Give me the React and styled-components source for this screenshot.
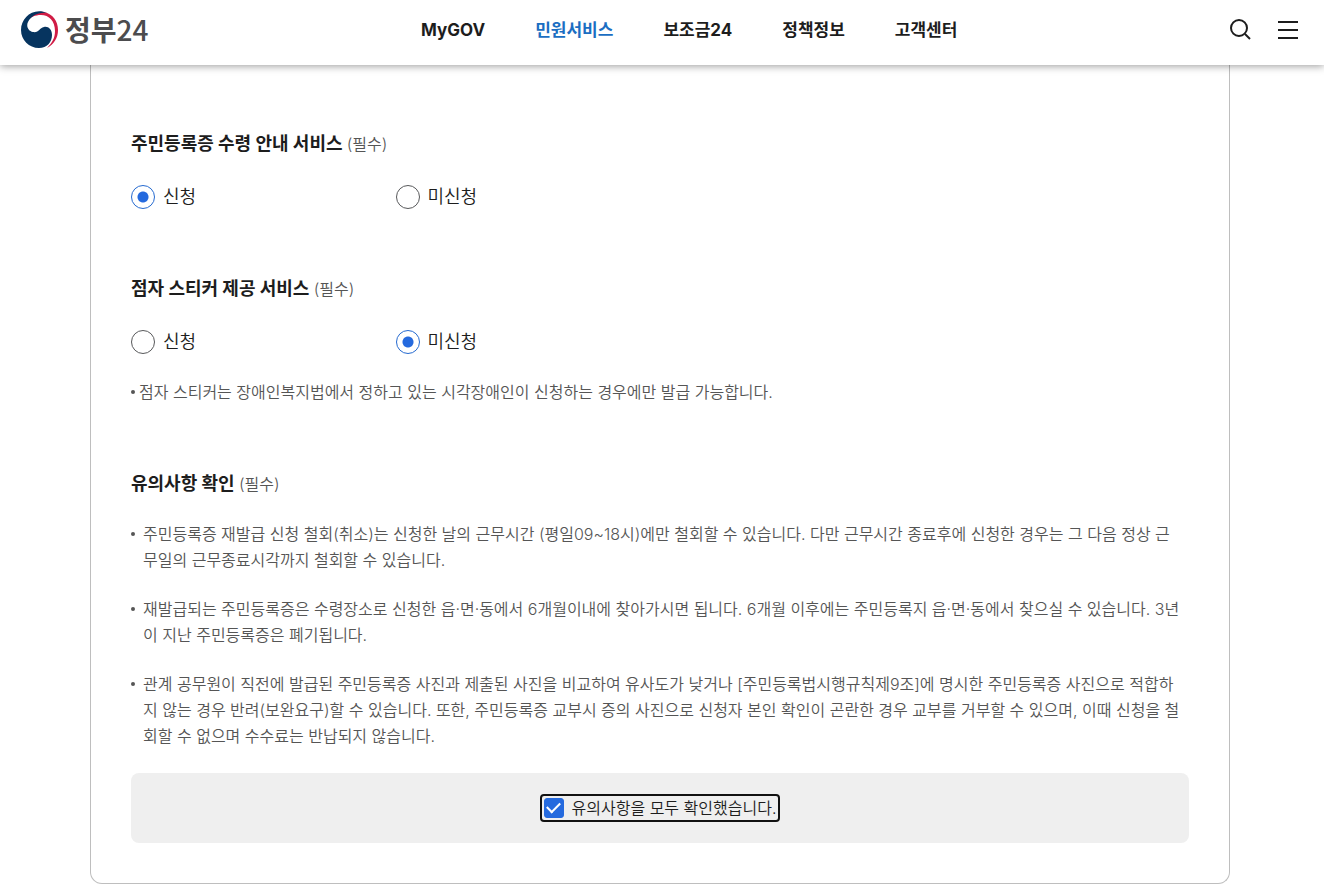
import React, { useState } from 'react';
import styled, { createGlobalStyle } from 'styled-components';

const menus = ['MyGOV', '민원서비스', '보조금24', '정책정보', '고객센터'];

const notices = [
  '주민등록증 재발급 신청 철회(취소)는 신청한 날의 근무시간 (평일09~18시)에만 철회할 수 있습니다. 다만 근무시간 종료후에 신청한 경우는 그 다음 정상 근무일의 근무종료시각까지 철회할 수 있습니다.',
  '재발급되는 주민등록증은 수령장소로 신청한 읍·면·동에서 6개월이내에 찾아가시면 됩니다. 6개월 이후에는 주민등록지 읍·면·동에서 찾으실 수 있습니다. 3년이 지난 주민등록증은 폐기됩니다.',
  '관계 공무원이 직전에 발급된 주민등록증 사진과 제출된 사진을 비교하여 유사도가 낮거나 [주민등록법시행규칙제9조]에 명시한 주민등록증 사진으로 적합하지 않는 경우 반려(보완요구)할 수 있습니다. 또한, 주민등록증 교부시 증의 사진으로 신청자 본인 확인이 곤란한 경우 교부를 거부할 수 있으며, 이때 신청을 철회할 수 없으며 수수료는 반납되지 않습니다.',
];

function ChoiceField({ name, title, defaultValue, children }) {
  const [value, setValue] = useState(defaultValue);

  return (
    <Field>
      <Title as="legend">
        {title} <Required>(필수)</Required>
      </Title>
      <Choices>
        {['신청', '미신청'].map((option) => (
          <Choice key={option}>
            <Radio name={name} value={option} checked={value === option} onChange={() => setValue(option)} />
            {option}
          </Choice>
        ))}
      </Choices>
      {children}
    </Field>
  );
}

export default function App() {
  const [agreed, setAgreed] = useState(true);

  return (
    <>
      <GlobalStyle />
      <Header>
        <Logo href="#home">
          <svg width="38" height="38" viewBox="0 0 38 38" aria-hidden="true">
            <path
              d="M6 10C10 3 17 0 23 1C32 3 37 10 37 19C37 27 33 33 26 37C31 32 34 27 34 20C34 10 28 4 20 4C14 4 10 6 6 10Z"
              fill="#d01c45"
            />
            <path
              d="M26 2C12-4 0 7 0 19C0 29 8 37 18 37C26 37 31 31 31 24C31 18 27 15 23 16C18 17 18 22 12 21C7 20 5 15 7 11C10 5 17 1 26 2Z"
              fill="#06345f"
            />
          </svg>
          <LogoText>
            정부<LogoNumber>24</LogoNumber>
          </LogoText>
        </Logo>
        <Nav>
          {menus.map((menu) => (
            <NavLink key={menu} href="#menu" $active={menu === '민원서비스'}>
              {menu}
            </NavLink>
          ))}
        </Nav>
        <Tools>
          <IconButton type="button" aria-label="검색">
            <svg width="22" height="22" viewBox="0 0 22 22" fill="none" stroke="#1d1d1d" strokeWidth="2">
              <circle cx="9" cy="9" r="8" />
              <path d="M15 15L20 20" />
            </svg>
          </IconButton>
          <IconButton type="button" aria-label="전체메뉴">
            <svg width="20" height="18" viewBox="0 0 20 18" fill="#1d1d1d">
              <path d="M0 0H20V2H0ZM0 8H20V10H0ZM0 16H20V18H0Z" />
            </svg>
          </IconButton>
        </Tools>
      </Header>
      <Main>
        <Card>
          <ChoiceField name="pickup" title="주민등록증 수령 안내 서비스" defaultValue="신청" />
          <ChoiceField name="braille" title="점자 스티커 제공 서비스" defaultValue="미신청">
            <Hint>점자 스티커는 장애인복지법에서 정하고 있는 시각장애인이 신청하는 경우에만 발급 가능합니다.</Hint>
          </ChoiceField>
          <section>
            <Title>
              유의사항 확인 <Required>(필수)</Required>
            </Title>
            <NoticeList>
              {notices.map((notice) => (
                <Notice key={notice}>{notice}</Notice>
              ))}
            </NoticeList>
            <AgreeBox>
              <AgreeLabel>
                <Checkbox checked={agreed} onChange={(e) => setAgreed(e.target.checked)} />
                유의사항을 모두 확인했습니다.
              </AgreeLabel>
            </AgreeBox>
          </section>
        </Card>
      </Main>
    </>
  );
}

const GlobalStyle = createGlobalStyle`
  * {
    box-sizing: border-box;
  }
  body {
    margin: 0;
    background: #fff;
    color: #1d1d1d;
    font-family: Inter, 'Noto Sans CJK KR', sans-serif;
    font-size: 16px;
    font-weight: 350;
    line-height: 26px;
  }
`;

const Header = styled.header`
  position: relative;
  z-index: 1;
  display: flex;
  align-items: center;
  justify-content: space-between;
  height: 65px;
  padding: 0 26px 5px 21px;
  background: #fff;
  box-shadow: 0 1px 8px rgba(0, 0, 0, 0.4);
`;

const Logo = styled.a`
  display: flex;
  align-items: center;
  gap: 6px;
  color: #4c4c4e;
  text-decoration: none;
`;

const LogoText = styled.span`
  padding-bottom: 2px;
  font-family: 'Noto Sans CJK KR', sans-serif;
  font-size: 28px;
  font-weight: 700;
  line-height: 36px;
`;

const LogoNumber = styled.span`
  font-weight: 500;
`;

const Nav = styled.nav`
  display: flex;
  gap: 50px;
`;

const NavLink = styled.a`
  color: ${(p) => (p.$active ? '#1b6ec2' : '#1d1d1d')};
  font-size: 17px;
  font-weight: 700;
  text-decoration: none;
`;

const Tools = styled.div`
  display: flex;
  align-items: center;
  gap: 26px;
`;

const IconButton = styled.button`
  display: flex;
  padding: 0;
  border: 0;
  background: none;
  cursor: pointer;
`;

const Main = styled.main`
  padding: 0 94px 10px 90px;
`;

const Card = styled.div`
  display: flex;
  flex-direction: column;
  gap: 66px;
  padding: 66px 40px 40px;
  border: 1px solid #bebebe;
  border-top: 0;
  border-radius: 0 0 12px 12px;
`;

const Field = styled.fieldset`
  min-width: 0;
  margin: 0;
  padding: 0;
  border: 0;
`;

const Title = styled.h2`
  margin: 0;
  padding: 0;
  font-size: 18px;
  font-weight: 700;
  line-height: 26px;
`;

const Required = styled.span`
  color: #555;
  font-size: 16px;
  font-weight: 350;
`;

const Choices = styled.div`
  display: grid;
  grid-template-columns: repeat(4, 1fr);
  margin-top: 27px;
`;

const Choice = styled.label`
  display: flex;
  align-items: center;
  gap: 8px;
  font-size: 18px;
  cursor: pointer;
`;

const Radio = styled.input.attrs({ type: 'radio' })`
  appearance: none;
  width: 24px;
  height: 24px;
  margin: 0;
  border: 1px solid #58595b;
  border-radius: 50%;
  background: #fff;
  &:checked {
    border-color: #256ad0;
    background: radial-gradient(circle, #256ade 5px, #fff 6px);
  }
`;

const Hint = styled.p`
  display: flex;
  align-items: center;
  gap: 4px;
  margin: 24px 0 0;
  color: #555;
  &::before {
    content: '';
    width: 4px;
    height: 4px;
    border-radius: 50%;
    background: #555;
  }
`;

const NoticeList = styled.ul`
  display: flex;
  flex-direction: column;
  gap: 23px;
  margin: 24px 0 0;
  padding: 0 7px 0 0;
  list-style: none;
`;

const Notice = styled.li`
  display: flex;
  gap: 8px;
  color: #555;
  &::before {
    content: '';
    flex: none;
    width: 4px;
    height: 4px;
    margin-top: 11px;
    border-radius: 50%;
    background: #555;
  }
`;

const AgreeBox = styled.div`
  display: flex;
  align-items: center;
  justify-content: center;
  height: 70px;
  margin-top: 24px;
  border-radius: 8px;
  background: #efefef;
`;

const AgreeLabel = styled.label`
  display: flex;
  align-items: center;
  gap: 8px;
  padding: 0 2px;
  border: 2px solid #111;
  border-radius: 4px;
  line-height: 24px;
  cursor: pointer;
`;

const Checkbox = styled.input.attrs({ type: 'checkbox' })`
  appearance: none;
  display: grid;
  place-items: center;
  width: 20px;
  height: 20px;
  margin: 0;
  border: 1px solid #58595b;
  border-radius: 3px;
  background: #fff;
  outline: none;
  &:checked {
    border-color: #256ade;
    background: #256ade;
  }
  &:checked::before {
    content: '';
    width: 11px;
    height: 6px;
    margin-bottom: 4px;
    border: solid #fff;
    border-width: 0 0 2px 2px;
    transform: rotate(-45deg);
  }
`;
